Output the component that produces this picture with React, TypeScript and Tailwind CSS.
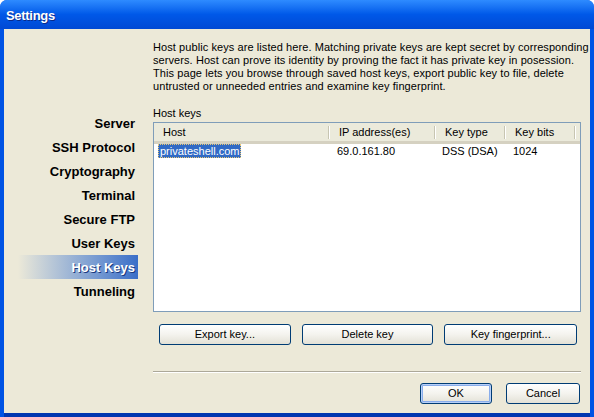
import React from "react";

const font = { fontFamily: '"Liberation Sans", Arial, sans-serif' };

const sections = [
  "Server",
  "SSH Protocol",
  "Cryptography",
  "Terminal",
  "Secure FTP",
  "User Keys",
  "Host Keys",
  "Tunneling",
];

const intro = [
  "Host public keys are listed here. Matching private keys are kept secret by corresponding",
  "servers. Host can prove its identity by proving the fact it has private key in posession.",
  "This page lets you browse through saved host keys, export public key to file, delete",
  "untrusted or unneeded entries and examine key fingerprint.",
];

const columns = [
  { label: "Host", width: "w-[176px]" },
  { label: "IP address(es)", width: "w-[106px]" },
  { label: "Key type", width: "w-[70px]" },
  { label: "Key bits", width: "w-[70px]" },
];

function XpButton({
  children,
  className = "",
  isDefault = false,
}: {
  children: React.ReactNode;
  className?: string;
  isDefault?: boolean;
}) {
  return (
    <button
      className={`h-[21px] rounded-[3px] border border-[#003c74] bg-gradient-to-b from-[#ffffff] via-[#f4f3ee] to-[#e3e1d6] text-[11px] text-black flex items-center justify-center ${
        isDefault ? "shadow-[inset_0_0_0_1px_#b8d0f8,inset_0_0_0_2px_#89adeb]" : ""
      } ${className}`}
    >
      {children}
    </button>
  );
}

export default function App() {
  return (
    <div
      style={font}
      className="w-[594px] h-[417px] rounded-t-[7px] bg-[#0053e4] flex flex-col overflow-hidden"
    >
      {/* title bar */}
      <div className="h-[29px] shrink-0 bg-gradient-to-b from-[#2e8bff] via-[#0058e8] to-[#0049d4] flex items-center pl-[6px] pt-[3px]">
        <span className="text-white font-bold text-[13px] tracking-[-0.3px] [text-shadow:1px_1px_0_#0a2a8a]">
          Settings
        </span>
      </div>

      <div className="flex-1 flex flex-col ml-[4px] mr-[4px] bg-[#ece9d8] border-b-[4px] border-b-[#0036b0]">
        <div className="flex flex-1">
          {/* sidebar */}
          <div className="w-[149px] shrink-0 pt-[82px] pl-[14px]">
            {sections.map((s) => {
              const active = s === "Host Keys";
              return (
                <div
                  key={s}
                  className={`h-[24px] w-[120px] flex items-center justify-end pr-[3px] pt-[1px] text-[13px] font-bold ${
                    active
                      ? "bg-gradient-to-r from-[#ece9d8] to-[#3a6ec8] text-white [text-shadow:1px_1px_0_#1a3a80]"
                      : "text-black"
                  }`}
                >
                  {s}
                </div>
              );
            })}
          </div>

          {/* main column */}
          <div className="w-[428px] shrink-0 min-w-0 flex flex-col pt-[12px]">
            <div className="text-[11px] leading-[13px] tracking-[0.08px] text-black">
              {intro.map((line) => (
                <div key={line} className="whitespace-nowrap">
                  {line}
                </div>
              ))}
            </div>
            <div className="mt-[14px] text-[11px] leading-[13px] text-black">Host keys</div>

            {/* table */}
            <div className="mt-[2px] h-[190px] border border-[#7f9db9] bg-white flex flex-col">
              <div className="h-[21px] shrink-0 bg-[#ebeadb] border-b-[3px] border-b-[#d5d1c1] flex">
                {columns.map((c) => (
                  <div
                    key={c.label}
                    className={`${c.width} relative h-full flex items-center pl-[9px] text-[11px] text-black`}
                  >
                    {c.label}
                    <span className="absolute right-0 top-[3px] h-[13px] w-[2px] border-l border-l-[#c7c5b2] border-r border-r-white" />
                  </div>
                ))}
              </div>
              <div className="h-[14px] flex text-[11px] leading-[14px] text-black">
                <div className="w-[176px] pl-[4px]">
                  <span className="inline-block h-[14px] px-[2px] bg-[#316ac5] text-white outline outline-1 outline-dotted outline-[#e8c874] -outline-offset-1">
                    privateshell.com
                  </span>
                </div>
                <div className="w-[106px] pl-[7px]">69.0.161.80</div>
                <div className="w-[70px] pl-[6px]">DSS (DSA)</div>
                <div className="w-[70px] pl-[7px]">1024</div>
              </div>
            </div>

            {/* action buttons */}
            <div className="mt-[12px] flex pl-[6px] pr-[4px] gap-[10px]">
              <XpButton className="w-[132px]">Export key...</XpButton>
              <XpButton className="w-[132px] ml-[1px]">Delete key</XpButton>
              <XpButton className="w-[133px] ml-[1px]">Key fingerprint...</XpButton>
            </div>

            <div className="mt-[26px] border-t border-t-[#aca899] border-b border-b-white" />

            <div className="mt-[10px] flex justify-end gap-[14px] pb-[8px] pr-[1px]">
              <XpButton isDefault className="w-[72px]">OK</XpButton>
              <XpButton className="w-[74px]">Cancel</XpButton>
            </div>
          </div>
        </div>
      </div>
    </div>
  );
}
